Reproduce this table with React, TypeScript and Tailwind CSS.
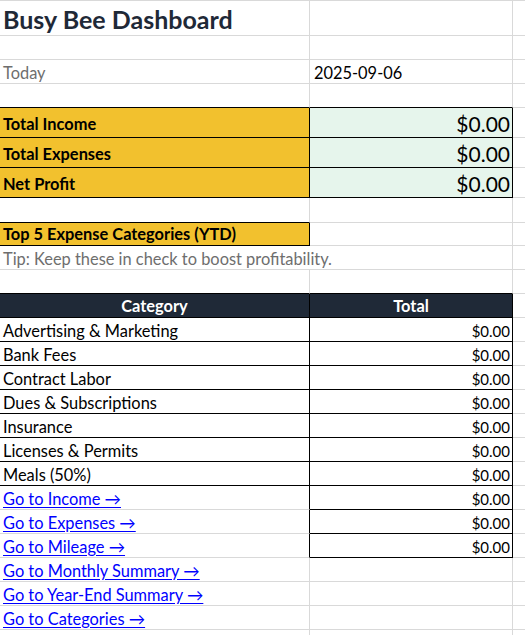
import React from "react";

const money = "$0.00";

export default function App() {
  const cats = [
    "Advertising & Marketing",
    "Bank Fees",
    "Contract Labor",
    "Dues & Subscriptions",
    "Insurance",
    "Licenses & Permits",
    "Meals (50%)",
  ];
  const links = ["Go to Income →", "Go to Expenses →", "Go to Mileage →"];
  const links2 = [
    "Go to Monthly Summary →",
    "Go to Year-End Summary →",
    "Go to Categories →",
  ];
  return (
    <div
      className="w-[525px] h-[635px] overflow-hidden bg-white text-[16.4px] text-black"
      style={{ fontFamily: "Lato, 'Open Sans', sans-serif" }}
    >
      <div className="border-t border-[#d9d9d9]">
        {/* Title */}
        <div className="grid grid-cols-[310px_203px_1fr] h-[35px]">
          <div className="border-r border-b border-[#d9d9d9] flex items-end pl-[3px] pb-[1px]">
            <span className="text-[25px] font-bold text-[#1f2937] leading-none pb-[2px]">
              Busy Bee Dashboard
            </span>
          </div>
          <div className="border-r border-b border-[#d9d9d9]" />
          <div className="border-b border-[#d9d9d9]" />
        </div>
        <div className="grid grid-cols-[310px_203px_1fr] h-[24px]">
          <div className="border-r border-b border-[#d9d9d9]" />
          <div className="border-r border-b border-[#d9d9d9]" />
          <div className="border-b border-[#d9d9d9]" />
        </div>
        {/* Today */}
        <div className="grid grid-cols-[310px_203px_1fr] h-[24px]">
          <div className="border-r border-b border-[#d9d9d9] flex items-end pl-[3px] pb-[2px] text-[#6e6e6e] leading-none">
            Today
          </div>
          <div className="border-r border-b border-[#d9d9d9] flex items-end pl-[4px] pb-[2px] leading-none">
            2025-09-06
          </div>
          <div className="border-b border-[#d9d9d9]" />
        </div>
        <div className="grid grid-cols-[310px_203px_1fr] h-[24px]">
          <div className="border-r border-b border-r-[#d9d9d9] border-b-black" />
          <div className="border-r border-b border-r-[#d9d9d9] border-b-black" />
          <div className="border-b border-[#d9d9d9]" />
        </div>
        {["Total Income", "Total Expenses", "Net Profit"].map((t) => (
          <div key={t} className="grid grid-cols-[310px_203px_1fr] h-[30px]">
            <div className="bg-[#f2c12e] border-r border-b border-black flex items-end pl-[3px] pb-[5px] font-bold leading-none">
              {t}
            </div>
            <div className="bg-[#e6f5ec] border-r border-b border-black flex items-end justify-end pr-[2px] pb-[3px] text-[21px] leading-none">
              {money}
            </div>
            <div className="border-b border-[#d9d9d9]" />
          </div>
        ))}
        <div className="grid grid-cols-[310px_203px_1fr] h-[25px]">
          <div className="border-r border-b border-r-[#d9d9d9] border-b-black" />
          <div className="border-r border-b border-[#d9d9d9]" />
          <div className="border-b border-[#d9d9d9]" />
        </div>
        {/* Top 5 */}
        <div className="grid grid-cols-[310px_203px_1fr] h-[23px]">
          <div className="bg-[#f2c12e] border-r border-b border-black flex items-end pl-[3px] pb-[3px] font-bold leading-none">
            Top 5 Expense Categories (YTD)
          </div>
          <div className="border-r border-b border-[#d9d9d9]" />
          <div className="border-b border-[#d9d9d9]" />
        </div>
        {/* Tip */}
        <div className="grid grid-cols-[310px_203px_1fr] h-[24px]">
          <div className="border-b border-[#d9d9d9] flex items-end pl-[3px] pb-[2px] text-[#6e6e6e] leading-none whitespace-nowrap overflow-visible">
            Tip: Keep these in check to boost profitability.
          </div>
          <div className="border-r border-b border-[#d9d9d9]" />
          <div className="border-b border-[#d9d9d9]" />
        </div>
        <div className="grid grid-cols-[310px_203px_1fr] h-[24px]">
          <div className="border-r border-b border-r-[#d9d9d9] border-b-black" />
          <div className="border-r border-b border-r-[#d9d9d9] border-b-black" />
          <div className="border-b border-[#d9d9d9]" />
        </div>
        {/* Header */}
        <div className="grid grid-cols-[310px_203px_1fr] h-[24px]">
          <div className="bg-[#1f2937] border-r border-b border-black flex items-end justify-center pb-[3px] font-bold text-white leading-none">
            Category
          </div>
          <div className="bg-[#1f2937] border-r border-b border-black flex items-end justify-center pb-[3px] font-bold text-white leading-none">
            Total
          </div>
          <div className="border-b border-[#d9d9d9]" />
        </div>
        {cats.map((c) => (
          <div key={c} className="grid grid-cols-[310px_203px_1fr] h-[24px]">
            <div className="border-r border-b border-black flex items-end pl-[3px] pb-[2px] leading-none">
              {c}
            </div>
            <div className="border-r border-b border-black flex items-end justify-end pr-[2px] pb-[2px] text-[15px] leading-none">
              {money}
            </div>
            <div className="border-b border-[#d9d9d9]" />
          </div>
        ))}
        {links.map((c) => (
          <div key={c} className="grid grid-cols-[310px_203px_1fr] h-[24px]">
            <div className="border-r border-b border-r-black border-b-[#d9d9d9] flex items-end pl-[3px] pb-[2px] leading-none">
              <span className="text-[#0000ff] underline underline-offset-2">{c}</span>
            </div>
            <div className="border-r border-b border-black flex items-end justify-end pr-[2px] pb-[2px] text-[15px] leading-none">
              {money}
            </div>
            <div className="border-b border-[#d9d9d9]" />
          </div>
        ))}
        {links2.map((c) => (
          <div key={c} className="grid grid-cols-[310px_203px_1fr] h-[24px]">
            <div className="border-r border-b border-[#d9d9d9] flex items-end pl-[3px] pb-[2px] leading-none">
              <span className="text-[#0000ff] underline underline-offset-2">{c}</span>
            </div>
            <div className="border-r border-b border-[#d9d9d9]" />
            <div className="border-b border-[#d9d9d9]" />
          </div>
        ))}
        <div className="grid grid-cols-[310px_203px_1fr] h-[24px]">
          <div className="border-r border-b border-[#d9d9d9]" />
          <div className="border-r border-b border-[#d9d9d9]" />
          <div className="border-b border-[#d9d9d9]" />
        </div>
      </div>
    </div>
  );
}
